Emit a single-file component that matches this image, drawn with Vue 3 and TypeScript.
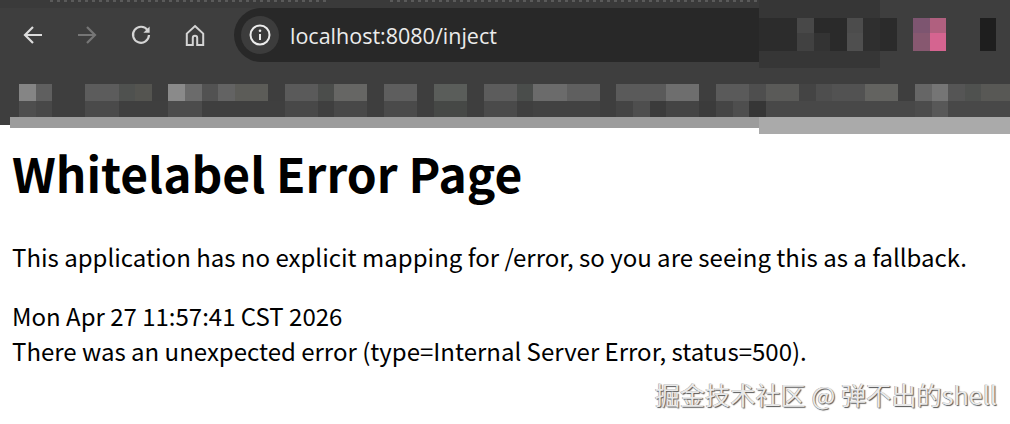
<script setup lang="ts">
type Run = [number, string]
const expand = (runs: Run[]): string[] =>
  runs.flatMap(([n, c]) => Array.from({ length: n }, () => c))

const bg = 'transparent'
const rowOne = expand([
  [1, '#858585'], [1, '#5f5f5f'], [2, bg], [2, '#5c5c5c'], [1, '#4f514f'], [1, '#545450'], [1, bg],
  [1, '#8a8a8a'], [1, '#6b6b6b'], [1, '#525252'], [1, '#636363'], [2, '#5c5c58'], [1, bg], [2, '#5a5a5a'],
  [1, '#4b4d4b'], [2, '#666664'], [1, bg], [2, '#5e5e5e'], [1, bg], [2, '#5a5d5a'], [1, bg], [2, '#5c5c5c'],
  [1, '#4a4d4b'], [2, '#6b6b6b'], [2, '#5f5f5f'], [1, bg], [3, '#5a5a5a'], [2, '#6e6e6e'], [1, bg],
  [2, '#5a5a5a'], [1, '#4e4e4e'], [2, '#5a5a58'], [1, '#444444'], [1, '#4e4e4e'], [2, '#525252'],
  [2, '#636360'], [1, bg], [1, '#666666'], [1, '#757575'], [1, '#555555'], [1, '#4f514f'], [2, '#585855'],
])
const rowTwo = expand([
  [1, '#4e4e4e'], [1, '#484848'], [2, bg], [2, '#4a4a4a'], [3, '#3f3f3f'], [2, '#4c4c4c'], [5, '#3f3f3f'],
  [2, '#484848'], [1, '#3f3f3f'], [2, '#484848'], [1, bg], [2, '#4a4a4a'], [1, bg], [2, '#464846'], [1, bg],
  [2, '#4a4a4a'], [1, '#3f3f3f'], [4, '#424242'], [1, bg], [1, '#444444'], [1, '#4e4e4e'], [1, '#3b3b3b'],
  [2, '#444444'], [1, '#3b3b3b'], [1, '#454545'], [1, '#4e4e4e'], [1, '#363636'], [9, '#484848'],
  [1, '#4c4c4c'], [1, '#585858'], [4, '#484848'],
])
const mosaic = [...rowOne, ...rowTwo]

const patch = [
  '#484848', '#2a2a2a', '#2a2a2a', '#4c4c4c', '#2f2f2f', '#2b2b2b', bg, '#7d5570', '#b0607f', bg, bg, '#1e1e1e',
  '#414141', '#333333', '#2a2a2a', '#4f4f4f', '#2f2f2f', '#2b2b2b', bg, '#875870', '#d56490', bg, bg, '#1e1e1e',
]
</script>

<template>
  <div class="page">
    <header class="chrome">
      <div class="strip"><span class="dots"></span><span class="dots short"></span></div>
      <div class="toolbar">
        <nav class="nav">
          <span class="nav-btn">
            <svg width="24" height="24" viewBox="0 0 24 24" fill="none" stroke="#dcdcdc" stroke-width="2.2">
              <path d="M21 12H4M12 4l-8 8 8 8" />
            </svg>
          </span>
          <span class="nav-btn">
            <svg width="24" height="24" viewBox="0 0 24 24" fill="none" stroke="#767676" stroke-width="2.2">
              <path d="M3 12h17M12 4l8 8-8 8" />
            </svg>
          </span>
          <span class="nav-btn">
            <svg width="24" height="24" viewBox="0 0 24 24" fill="none" stroke="#d4d4d4" stroke-width="2.2">
              <path d="M18.600 7.200A8 8 0 1 0 20 12" />
              <path d="M20.600 3.600v6.200h-6.200z" fill="#d4d4d4" stroke="none" />
            </svg>
          </span>
          <span class="nav-btn">
            <svg width="24" height="24" viewBox="0 0 24 24" fill="none" stroke="#d4d4d4" stroke-width="2">
              <path d="M12 3l8.200 7.600V22h-6v-7a2.200 2.200 0 0 0-4.400 0v7h-6V10.600z" />
            </svg>
          </span>
        </nav>
        <div class="omnibox">
          <span class="site-info">
            <svg width="24" height="24" viewBox="0 0 24 24" fill="none" stroke="#ececec" stroke-width="2">
              <circle cx="12" cy="12" r="9.500" />
              <path d="M12 11v6" />
              <circle cx="12" cy="7.800" r="1.300" fill="#ececec" stroke="none" />
            </svg>
          </span>
          <span class="url">localhost:8080/inject</span>
        </div>
      </div>
      <div class="mosaic">
        <span v-for="(c, i) in mosaic" :key="i" :style="{ background: c }"></span>
      </div>
      <div class="patch">
        <div class="patch-grid">
          <span class="patch-lead"></span>
          <span v-for="(c, i) in patch" :key="i" :style="{ background: c }"></span>
        </div>
      </div>
    </header>

    <div class="edge">
      <span class="edge-corner"></span>
      <span class="edge-left"></span>
      <span class="edge-right"></span>
    </div>

    <main class="content">
      <h1>Whitelabel Error Page</h1>
      <p class="lead">This application has no explicit mapping for /error, so you are seeing this as a fallback.</p>
      <div>Mon Apr 27 11:57:41 CST 2026</div>
      <div>There was an unexpected error (type=Internal Server Error, status=500).</div>
    </main>

    <div class="watermark">掘金技术社区 @ 弹不出的shell</div>
  </div>
</template>

<style scoped>
.page {
  position: relative;
  width: 1010px;
  height: 424px;
  overflow: hidden;
  background: #fff;
  font-family: "Noto Sans CJK SC", "Noto Sans", sans-serif;
}
.chrome {
  position: relative;
  height: 117px;
  background: #3e3e3e;
  display: flex;
  flex-direction: column;
}
.strip {
  height: 8px;
  display: flex;
  gap: 60px;
  padding-left: 50px;
  background: #3a3a3a;
}
.dots {
  width: 280px;
  height: 2px;
  background: repeating-linear-gradient(to right, #5a5a5a 0 3px, #3a3a3a 3px 7px);
}
.dots.short {
  width: 380px;
}
.toolbar {
  height: 54px;
  display: flex;
  padding-left: 6px;
}
.nav {
  display: flex;
  width: 216px;
}
.nav-btn {
  width: 54px;
  display: flex;
  align-items: center;
  justify-content: center;
}
.omnibox {
  margin-left: 12px;
  width: 525px;
  border-radius: 27px 0 0 27px;
  background: #282828;
  display: flex;
  align-items: center;
  padding-left: 7px;
  box-sizing: border-box;
}
.site-info {
  width: 38px;
  height: 38px;
  border-radius: 50%;
  background: #3c3c3c;
  display: flex;
  align-items: center;
  justify-content: center;
}
.url {
  margin-left: 11px;
  font-family: "Open Sans", sans-serif;
  font-size: 21.500px;
  color: #ececec;
}
.mosaic {
  margin-top: 22px;
  margin-left: 19px;
  display: grid;
  grid-template-columns: repeat(60, 16.6px);
  grid-template-rows: 17px 16px;
}
.patch {
  position: absolute;
  top: 0;
  left: 759px;
  width: 251px;
  height: 68px;
  box-sizing: border-box;
  padding-top: 18px;
  background: linear-gradient(to right, #363636 121px, #3e3e3e 121px);
}
.patch-grid {
  display: grid;
  grid-template-columns: 38px repeat(12, 16.6px);
  grid-template-rows: 15px 18px;
}
.patch-lead {
  grid-row: span 2;
  background: #2c2c2c;
}
.edge {
  height: 17px;
  display: flex;
  align-items: flex-start;
}
.edge-corner {
  width: 10px;
  height: 8px;
  background: #3e3e3e;
}
.edge-left {
  width: 749px;
  height: 11px;
  background: #9c9c9c;
}
.edge-right {
  width: 251px;
  height: 17px;
  background: #aaaaaa;
}
.content {
  padding: 0 0 0 12px;
  color: #000;
  font-size: 24px;
  line-height: 35.500px;
}
h1 {
  margin: 0;
  font-size: 47.900px;
  font-weight: 700;
  line-height: 72px;
  margin-top: 2px;
}
.lead {
  margin: 31px 0 23px;
}
.watermark {
  position: absolute;
  right: 13px;
  top: 376px;
  font-size: 25.200px;
  line-height: 36px;
  color: #e9e9e9;
  text-shadow: 1px 1px 1px #555, -0.5px -0.5px 0 #999;
  white-space: nowrap;
}
</style>
